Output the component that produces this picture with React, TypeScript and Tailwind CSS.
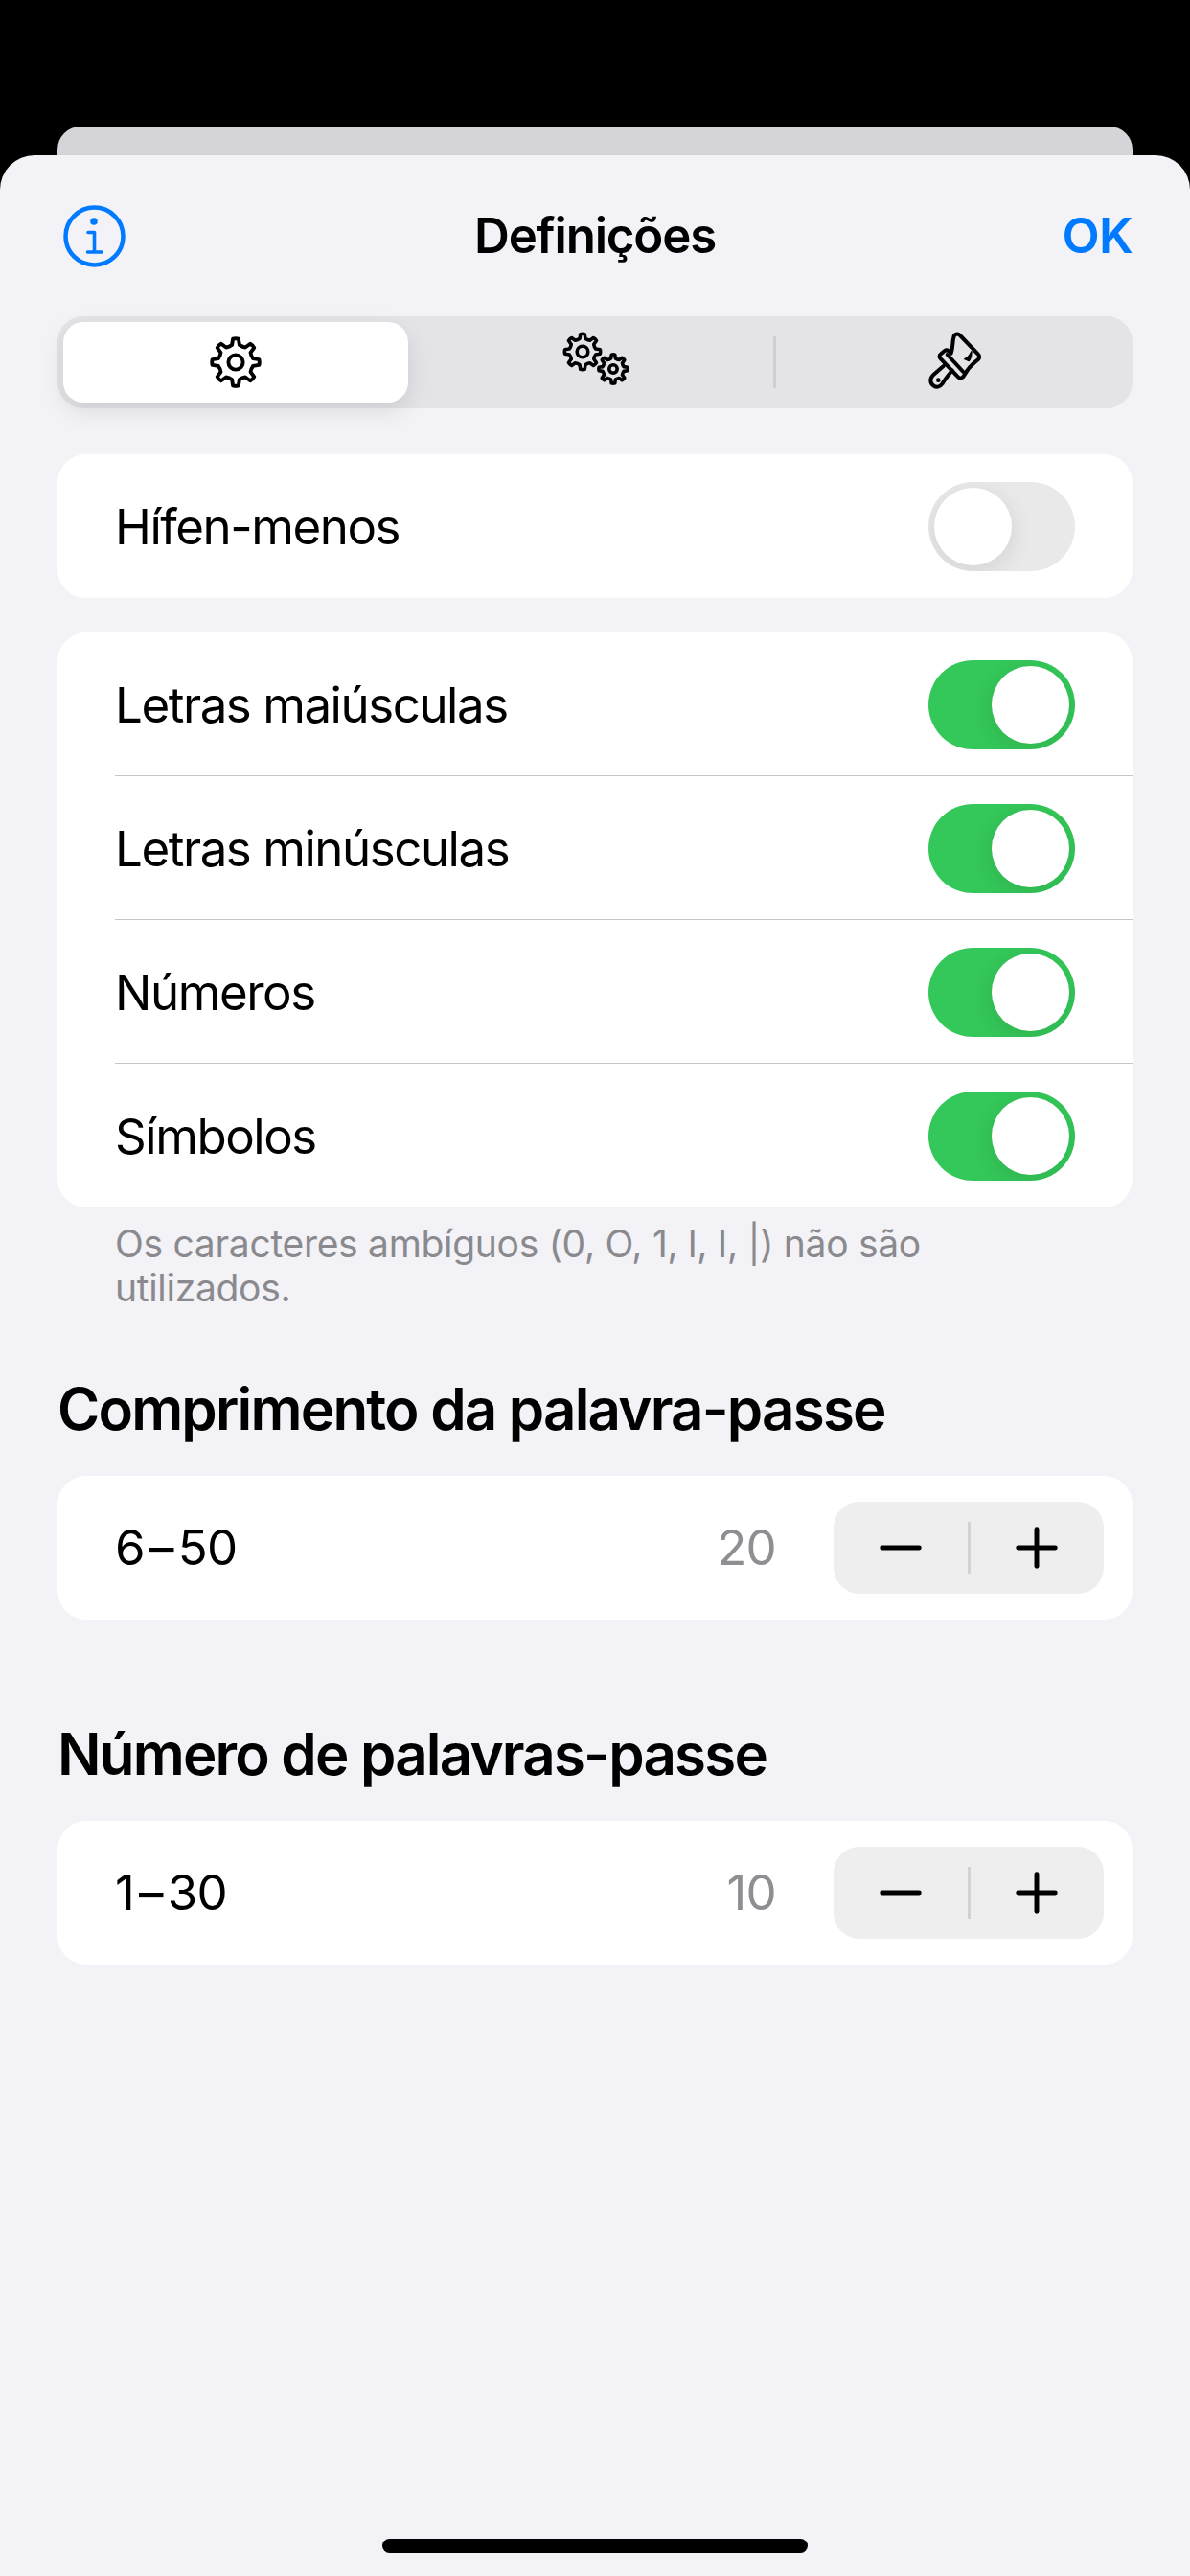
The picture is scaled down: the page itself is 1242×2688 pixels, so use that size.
import { Minus, Plus } from "lucide-react";

const font = "font-['Inter','Noto_Sans',sans-serif]";

// Outline of a cog with rounded-looking teeth, centred on cx/cy.
function gearPath(cx: number, cy: number, outer: number, inner: number, teeth = 8) {
  const step = (Math.PI * 2) / teeth;
  const pts: string[] = [];
  for (let i = 0; i < teeth; i++) {
    const a = -Math.PI / 2 + i * step;
    const at = (r: number, t: number) =>
      `${(cx + r * Math.cos(a + t * step)).toFixed(2)} ${(cy + r * Math.sin(a + t * step)).toFixed(2)}`;
    pts.push(`${i === 0 ? "M" : "L"}${at(inner, -0.27)}`);
    pts.push(`L${at(outer, -0.15)}`);
    pts.push(`Q${at(outer * 1.03, 0)} ${at(outer, 0.15)}`);
    pts.push(`L${at(inner, 0.27)}`);
    pts.push(`Q${at(inner * 0.94, 0.5)} ${at(inner, 0.73)}`);
  }
  return pts.join(" ") + " Z";
}

function InfoIcon() {
  return (
    <svg width="65" height="65" viewBox="0 0 65 65" fill="none" stroke="#007aff" className="ml-[6px] block">
      <circle cx="32.5" cy="32.5" r="30" strokeWidth="4.5" />
      <circle cx="32" cy="17" r="3.8" fill="#007aff" stroke="none" />
      <path d="M26 28.5H32.5V49M25.5 49H40" strokeWidth="3.6" strokeLinecap="round" strokeLinejoin="round" />
    </svg>
  );
}

function GearIcon() {
  return (
    <svg width="60" height="60" viewBox="0 0 60 60" fill="none" stroke="#000" strokeWidth="3.9" strokeLinejoin="round">
      <path d={gearPath(30, 30, 24.5, 18.5)} />
      <circle cx="30" cy="30" r="7.6" />
    </svg>
  );
}

function GearsIcon() {
  return (
    <svg width="80" height="64" viewBox="0 0 80 64" fill="none" stroke="#000" strokeWidth="3.6" strokeLinejoin="round" className="ml-[10px]">
      <path d={gearPath(26, 21, 18.5, 14)} />
      <circle cx="26" cy="21" r="5.8" />
      <path d={gearPath(58, 39, 15, 11.3)} />
      <circle cx="58" cy="39" r="4.2" />
    </svg>
  );
}

function BrushIcon() {
  return (
    <svg width="90" height="80" viewBox="0 0 270 240" fill="none" stroke="#000" strokeWidth="12" strokeLinecap="round" strokeLinejoin="round" className="ml-[4px]">
      <path d="M128 92C134 75 132 58 136 42C138 32 148 28 156 36L212 94C218 100 218 106 212 112C196 124 180 140 168 162C164 170 156 172 150 166L96 110C90 104 90 98 96 94L108 84C114 80 120 82 128 92Z" />
      <path d="M116 96L166 150" />
      <path d="M104 132L72 160C60 172 62 186 74 194C84 200 94 196 100 188C110 172 118 160 132 146" />
      <circle cx="88" cy="176" r="7" fill="#000" stroke="none" />
      <path d="M170 110C178 108 186 98 192 86C192 98 190 108 184 116Z" fill="#000" strokeWidth="4" />
    </svg>
  );
}

function Toggle({ on }: { on: boolean }) {
  return (
    <div
      className={`flex h-[93px] w-[153px] overflow-hidden rounded-full p-[6px] ${
        on ? "justify-end bg-[#34c759]" : "justify-start bg-[#e9e9ea]"
      }`}
    >
      <div className="h-[81px] w-[81px] rounded-full bg-white shadow-[0_6px_24px_rgba(0,0,0,0.1)]" />
    </div>
  );
}

function ToggleRow({ label, on, last }: { label: string; on: boolean; last?: boolean }) {
  return (
    <div className="h-[150px] pl-[60px]">
      <div
        className={`flex h-[150px] items-center justify-between border-b pt-[2px] pr-[60px] ${
          last ? "border-transparent" : "border-[#c6c6c8]"
        }`}
      >
        <span className="text-[51px] leading-[60px] tracking-[-1.45px] text-black">{label}</span>
        <Toggle on={on} />
      </div>
    </div>
  );
}

function StepperRow({ from, to, value }: { from: number; to: number; value: number }) {
  return (
    <div className="flex h-[150px] items-center rounded-[30px] bg-white pl-[60px] pr-[30px]">
      <span className="flex-1 text-[51px] leading-[60px] tracking-[-0.75px] text-black">
        {from}
        <span className="mx-[5px]">–</span>
        {to}
      </span>
      <span className="mr-[60px] text-[51px] leading-[60px] tracking-[-0.75px] text-[#8e8e93]">{value}</span>
      <div className="flex h-[96px] w-[282px] items-center rounded-[27px] bg-[#eeeeef]">
        <div className="flex flex-1 items-center justify-center">
          <Minus size={66} strokeWidth={1.8} color="#000" />
        </div>
        <div className="h-[54px] w-[3px] bg-[#d2d2d5]" />
        <div className="flex flex-1 items-center justify-center">
          <Plus size={66} strokeWidth={1.8} color="#000" />
        </div>
      </div>
    </div>
  );
}

export default function App() {
  return (
    <div className={`flex h-[2688px] w-full flex-col overflow-hidden bg-black pt-[132px] ${font}`}>
      <div className="mx-[60px] h-[30px] shrink-0 rounded-t-[24px] bg-[#d5d4d9]" />
      <div className="flex flex-1 flex-col rounded-t-[36px] bg-[#f2f2f7]">
        <header className="grid h-[168px] shrink-0 grid-cols-[1fr_auto_1fr] items-center px-[60px]">
          <InfoIcon />
          <h1 className="text-[51px] leading-[60px] font-semibold tracking-[-1.2px] text-black">Definições</h1>
          <span className="text-right text-[51px] leading-[60px] font-semibold tracking-[-0.75px] text-[#007aff]">OK</span>
        </header>

        <div className="mx-[60px] flex h-[96px] items-center rounded-[27px] bg-[#e3e3e8] p-[6px]">
          <div className="flex h-[84px] w-[360px] items-center justify-center rounded-[21px] bg-white shadow-[0_9px_24px_rgba(0,0,0,0.1)]">
            <GearIcon />
          </div>
          <div className="flex h-[84px] w-[381px] items-center justify-center">
            <GearsIcon />
          </div>
          <div className="h-[54px] w-[3px] bg-[#cfcfd3]" />
          <div className="flex h-[84px] flex-1 items-center justify-center">
            <BrushIcon />
          </div>
        </div>

        <div className="mx-[60px] mt-[48px] flex flex-col gap-[36px]">
          <div className="overflow-hidden rounded-[30px] bg-white">
            <ToggleRow label="Hífen-menos" on={false} last />
          </div>
          <div className="overflow-hidden rounded-[30px] bg-white">
            <ToggleRow label="Letras maiúsculas" on />
            <ToggleRow label="Letras minúsculas" on />
            <ToggleRow label="Números" on />
            <ToggleRow label="Símbolos" on last />
          </div>
        </div>

        <p className="mx-[120px] mt-[15px] text-[39px] leading-[46px] tracking-[-0.3px] text-[#8a8a8e]">
          Os caracteres ambíguos (0, O, 1, l, I, |) não são
          <br />
          utilizados.
        </p>

        <section className="mx-[60px] mt-[67px]">
          <h2 className="mb-[34px] h-[72px] text-[60px] leading-[72px] font-semibold tracking-[-1.8px] text-black">
            Comprimento da palavra-passe
          </h2>
          <StepperRow from={6} to={50} value={20} />
        </section>

        <section className="mx-[60px] mt-[104px]">
          <h2 className="mb-[34px] h-[72px] text-[60px] leading-[72px] font-semibold tracking-[-1.8px] text-black">
            Número de palavras-passe
          </h2>
          <StepperRow from={1} to={30} value={10} />
        </section>

        <div className="mt-auto mb-[24px] h-[15px] w-[444px] self-center rounded-full bg-black" />
      </div>
    </div>
  );
}
